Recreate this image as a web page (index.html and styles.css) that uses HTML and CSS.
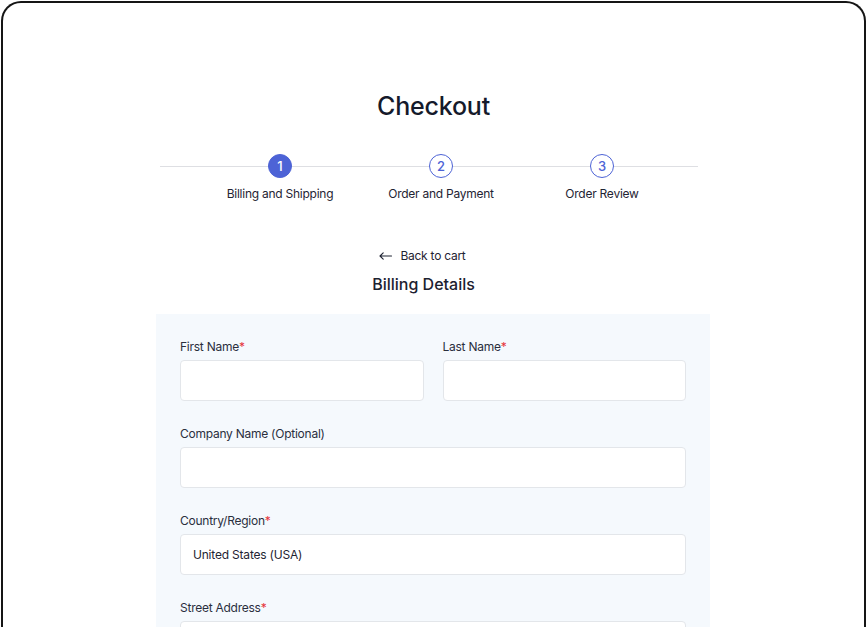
FILE: index.html
```html
<!DOCTYPE html>
<html>
<head>
<meta charset="utf-8">
<link rel="stylesheet" href="styles.css">
</head>
<body>
<div class="frame">
  <h1 class="title">Checkout</h1>
  <div class="stepper">
    <div class="steps">
      <div class="step">
        <span class="dot active">1</span>
        <span class="step-label">Billing and Shipping</span>
      </div>
      <div class="step">
        <span class="dot">2</span>
        <span class="step-label">Order and Payment</span>
      </div>
      <div class="step">
        <span class="dot">3</span>
        <span class="step-label">Order Review</span>
      </div>
    </div>
  </div>
  <div class="heading">
    <a class="back" href="#"><svg class="arrow" width="13" height="8" viewBox="0 0 13 8"><path d="M12.5 4H1M4.2 0.8L1 4l3.2 3.2" fill="none" stroke="#1f2433" stroke-width="1.1" stroke-linecap="round" stroke-linejoin="round"/></svg>Back to cart</a>
    <h2 class="subtitle">Billing Details</h2>
  </div>
  <form class="panel">
    <div class="row two">
      <div class="field">
        <label class="label">First Name<span class="req">*</span></label>
        <div class="input"></div>
      </div>
      <div class="field">
        <label class="label">Last Name<span class="req">*</span></label>
        <div class="input"></div>
      </div>
    </div>
    <div class="field">
      <label class="label">Company Name (Optional)</label>
      <div class="input"></div>
    </div>
    <div class="field">
      <label class="label">Country/Region<span class="req">*</span></label>
      <div class="input">United States (USA)</div>
    </div>
    <div class="field">
      <label class="label">Street Address<span class="req">*</span></label>
      <div class="input"></div>
    </div>
  </form>
</div>
</body>
</html>
```
FILE: styles.css
```css
* { box-sizing: border-box; }
html, body { margin: 0; padding: 0; background: #fff; }
body {
  font-family: Inter, "Noto Sans", sans-serif;
  color: #1c2130;
  padding: 1px 1px 0 1px;
  height: 628px;
  overflow: hidden;
}
.frame {
  border: 2px solid #151515;
  border-bottom: none;
  border-radius: 20px 20px 0 0;
  height: 626px;
  overflow: hidden;
  padding-top: 87px;
}
.title {
  margin: 0;
  text-align: center;
  font-size: 25px;
  line-height: 32px;
  font-weight: 500;
  color: #151a2b;
  letter-spacing: -0.2px;
}
.stepper {
  position: relative;
  width: 538px;
  margin: 32px 0 0 157px;
}
.stepper::before {
  content: "";
  position: absolute;
  left: 0; right: 0;
  top: 11.5px;
  height: 1px;
  background: #dedfe3;
}
.steps {
  position: relative;
  display: grid;
  grid-template-columns: repeat(3, 161px);
  padding-left: 39.5px;
}
.step {
  display: flex;
  flex-direction: column;
  align-items: center;
}
.dot {
  width: 24px;
  height: 24px;
  border-radius: 50%;
  border: 1px solid #4d63d6;
  background: #fff;
  color: #4d63d6;
  font-size: 13px;
  font-weight: 500;
  display: flex;
  align-items: center;
  justify-content: center;
}
.dot.active {
  background: #4d63d6;
  color: #fff;
}
.step-label {
  margin-top: 8px;
  font-size: 12px;
  line-height: 16px;
  letter-spacing: -0.25px;
  color: #1f2433;
}
.heading {
  display: flex;
  flex-direction: column;
  align-items: center;
  padding-right: 20px;
  margin-top: 46px;
}
.back {
  display: flex;
  align-items: center;
  gap: 8px;
  font-size: 12px;
  line-height: 16px;
  letter-spacing: -0.25px;
  color: #1f2433;
  text-decoration: none;
  margin-right: 2px;
}
.arrow { display: block; }
.subtitle {
  margin: 9px 0 0;
  font-size: 16px;
  line-height: 22px;
  font-weight: 500;
  color: #1c2130;
}
.panel {
  width: 554px;
  margin: 19px 0 0 153px;
  background: #f5f9fd;
  padding: 24px 24px 0;
  display: flex;
  flex-direction: column;
  gap: 24px;
}
.row.two {
  display: grid;
  grid-template-columns: 1fr 1fr;
  gap: 19px;
}
.field {
  display: flex;
  flex-direction: column;
  gap: 4px;
}
.label {
  font-size: 12px;
  line-height: 18px;
  letter-spacing: -0.25px;
  color: #2a2f3d;
}
.req { color: #e5333b; }
.input {
  height: 41px;
  background: #fff;
  border: 1px solid #e3e6ea;
  border-radius: 4px;
  padding: 0 12px;
  display: flex;
  align-items: center;
  font-size: 12px;
  letter-spacing: -0.2px;
  color: #1f2433;
}
```
